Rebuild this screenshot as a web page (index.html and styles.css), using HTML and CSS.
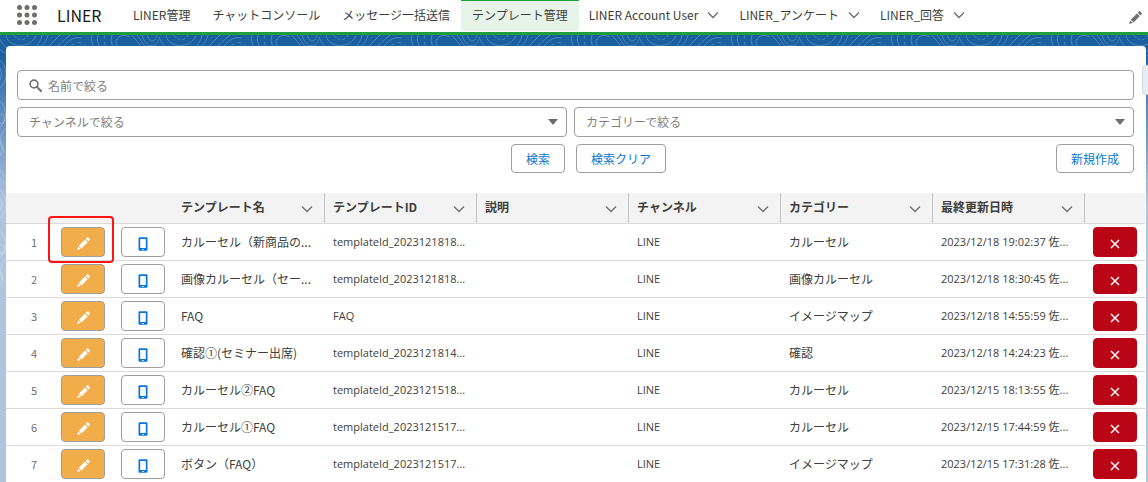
FILE: index.html
```
<!DOCTYPE html>
<html lang="ja">
<head>
<meta charset="utf-8">
<meta name="viewport" content="width=device-width, initial-scale=1">
<title>テンプレート管理 | LINER</title>
<link rel="stylesheet" href="styles.css">
</head>
<body>
<svg class="sprite" aria-hidden="true">
  <symbol id="i-pencil" viewBox="0 0 14 14"><path d="M8.600 2.800l2.900 2.900-6.600 6.600L2 9.400zM9.400 2l1.500-1.500c.4-.4.9-.4 1.200 0l1.600 1.600c.4.4.4.900 0 1.200L12.300 4.900zM1.400 10.200l2.600 2.600-3.300.9c-.3.100-.5-.1-.4-.4z"/></symbol>
  <symbol id="i-phone" viewBox="0 0 10 14"><path fill-rule="evenodd" d="M1.300.3h7.400c.4 0 .8.400.8.800v11.800c0 .4-.4.800-.8.800H1.300c-.4 0-.8-.4-.8-.8V1.100c0-.4.4-.8.8-.8zM2.200 2v9h5.600V2zM4.300 12v.9h1.400V12z"/></symbol>
  <symbol id="i-down" viewBox="0 0 12 8"><path d="M1 1.500l5 5 5-5" fill="none" stroke="currentColor" stroke-width="1.400"/></symbol>
  <symbol id="i-close" viewBox="0 0 10 10"><path d="M1 1l8 8M9 1l-8 8" fill="none" stroke="currentColor" stroke-width="1.500"/></symbol>
</svg>
<header class="nav">
  <button class="launcher" type="button" aria-label="アプリケーションランチャー">
    <svg width="20" height="20" viewBox="0 0 20 20"><g fill="currentColor"><circle cx="2.500" cy="2.500" r="2.500"/><circle cx="10" cy="2.500" r="2.500"/><circle cx="17.500" cy="2.500" r="2.500"/><circle cx="2.500" cy="10" r="2.500"/><circle cx="10" cy="10" r="2.500"/><circle cx="17.500" cy="10" r="2.500"/><circle cx="2.500" cy="17.500" r="2.500"/><circle cx="10" cy="17.500" r="2.500"/><circle cx="17.500" cy="17.500" r="2.500"/></g></svg>
  </button>
  <span class="app">LINER</span>
  <nav class="tabs">
    <a class="tab" href="#">LINER管理</a>
    <a class="tab" href="#">チャットコンソール</a>
    <a class="tab" href="#">メッセージ一括送信</a>
    <a class="tab active" href="#" aria-current="page">テンプレート管理</a>
    <a class="tab menu" href="#">LINER Account User<svg class="chev"><use href="#i-down"/></svg></a>
    <a class="tab menu" href="#">LINER_アンケート<svg class="chev"><use href="#i-down"/></svg></a>
    <a class="tab menu" href="#">LINER_回答<svg class="chev"><use href="#i-down"/></svg></a>
  </nav>
  <button class="customize" type="button" aria-label="ナビゲーションを編集"><svg class="pencil"><use href="#i-pencil"/></svg></button>
</header>
<div class="stage">
  <svg class="contours" aria-hidden="true">
    <defs>
      <pattern id="topo" width="160" height="130" patternUnits="userSpaceOnUse">
        <g fill="none" stroke="#fff" stroke-opacity=".22">
          <path d="M6 0c2 14 26 14 30 0M0 4c6 18 38 18 42-4M-2 12c12 16 44 12 50-12"/>
          <path d="M14 0c2 6 12 6 14 0" stroke-dasharray="3 2"/>
          <path d="M48 12L60 0M54 14L70 0M60 15c8-8 12-14 22-12M92 0c-2 6 1 10 3 14M98 0c-2 6 1 10 3 14M112 0c-2 6 0 10 2 14"/>
          <path d="M66 15c10-10 18-10 22 0M105 0c-2 6 0 10 2 14" stroke-dasharray="4 3"/>
          <path d="M118 14c-6-12 4-16 12-12M132 0l12 15M137 0l10 14M142 0c4 14 14 14 18 2M147 0c3 8 8 8 10 0"/>
          <path d="M-6 22c16 4 16 30 0 34M-6 28c10 4 10 18 0 22M0 66c8 8 8 24-4 28M0 80c6-4 6 12 0 8M6 118c-8-8-8-18 2-26M-2 104c6 4 6 14 0 18"/>
        </g>
      </pattern>
    </defs>
    <rect width="100%" height="260" fill="url(#topo)"/>
  </svg>
  <button class="pull" type="button" aria-label="パネルを開く"></button>
  <main class="panel">
    <form class="filters">
      <label class="field search">
        <svg class="glass" viewBox="0 0 13 13"><circle cx="5" cy="5" r="3.900" fill="none" stroke="currentColor" stroke-width="1.600"/><path d="M7.900 7.900l4.100 4.100" stroke="currentColor" stroke-width="2" stroke-linecap="round"/></svg>
        <input type="search" placeholder="名前で絞る" aria-label="名前で絞る">
      </label>
      <div class="pair">
        <label class="field"><select aria-label="チャンネルで絞る"><option>チャンネルで絞る</option></select><svg class="caret" viewBox="0 0 10 6"><path d="M0 0h10L5 6z" fill="currentColor"/></svg></label>
        <label class="field"><select aria-label="カテゴリーで絞る"><option>カテゴリーで絞る</option></select><svg class="caret" viewBox="0 0 10 6"><path d="M0 0h10L5 6z" fill="currentColor"/></svg></label>
      </div>
      <div class="actions">
        <div class="center"><button class="btn" type="button">検索</button><button class="btn" type="button">検索クリア</button></div>
        <button class="btn create" type="button">新規作成</button>
      </div>
    </form>
    <table class="grid">
      <colgroup><col class="c-num"><col class="c-act"><col class="c-act"><col span="6"><col class="c-act"></colgroup>
      <thead>
        <tr>
          <th></th><th></th><th></th>
          <th class="sep"><div class="head">テンプレート名<svg class="chev"><use href="#i-down"/></svg></div></th>
          <th class="sep"><div class="head">テンプレートID<svg class="chev"><use href="#i-down"/></svg></div></th>
          <th class="sep"><div class="head">説明<svg class="chev"><use href="#i-down"/></svg></div></th>
          <th class="sep"><div class="head">チャンネル<svg class="chev"><use href="#i-down"/></svg></div></th>
          <th class="sep"><div class="head">カテゴリー<svg class="chev"><use href="#i-down"/></svg></div></th>
          <th class="sep"><div class="head">最終更新日時<svg class="chev"><use href="#i-down"/></svg></div></th>
          <th></th>
        </tr>
      </thead>
      <tbody id="rows"></tbody>
    </table>
  </main>
</div>
<script src="rows.js"></script>
</body>
</html>
```
FILE: rows.js
```
const rows = [
  ["カルーセル（新商品の...", "templateId_2023121818...", "カルーセル", "2023/12/18 19:02:37 佐..."],
  ["画像カルーセル（セー...", "templateId_2023121818...", "画像カルーセル", "2023/12/18 18:30:45 佐..."],
  ["FAQ", "FAQ", "イメージマップ", "2023/12/18 14:55:59 佐..."],
  ["確認①(セミナー出席)", "templateId_2023121814...", "確認", "2023/12/18 14:24:23 佐..."],
  ["カルーセル②FAQ", "templateId_2023121518...", "カルーセル", "2023/12/15 18:13:55 佐..."],
  ["カルーセル①FAQ", "templateId_2023121517...", "カルーセル", "2023/12/15 17:44:59 佐..."],
  ["ボタン（FAQ）", "templateId_2023121517...", "イメージマップ", "2023/12/15 17:31:28 佐..."]
];
document.getElementById("rows").innerHTML = rows.map(([name, id, category, updated], i) => `
  <tr>
    <td class="num">${i + 1}</td>
    <td class="act${i === 0 ? " marked" : ""}"><button class="icon-btn edit" type="button" aria-label="編集"><svg class="pencil"><use href="#i-pencil"/></svg></button></td>
    <td class="act"><button class="icon-btn preview" type="button" aria-label="プレビュー"><svg class="phone"><use href="#i-phone"/></svg></button></td>
    <td>${name}</td>
    <td class="latin">${id}</td>
    <td></td>
    <td class="latin">LINE</td>
    <td>${category}</td>
    <td class="latin">${updated}</td>
    <td class="act"><button class="icon-btn delete" type="button" aria-label="削除"><svg class="cross"><use href="#i-close"/></svg></button></td>
  </tr>`).join("");
```
FILE: styles.css
```
* { box-sizing: border-box; }
body {
  margin: 0;
  min-height: 100vh;
  display: flex;
  flex-direction: column;
  overflow: hidden;
  font: 12px/18px "Noto Sans CJK JP", sans-serif;
  color: #3e3e3c;
}
button, input, select { font: inherit; color: inherit; margin: 0; }
button { cursor: pointer; padding: 0; }
.sprite { position: absolute; width: 0; height: 0; }
.nav {
  display: flex;
  align-items: stretch;
  height: 35px;
  flex: none;
  background: #fff;
  border-bottom: 3px solid #1f9f3a;
}
.launcher, .customize {
  display: flex;
  align-items: center;
  border: 0;
  background: none;
  color: #706e6b;
}
.launcher { padding: 0 20px 2px 17px; }
.app { font-size: 16px; line-height: 31px; color: #181818; width: 65px; flex: none; }
.tabs { display: flex; flex: 1; padding-bottom: 1px; white-space: nowrap; }
.tab {
  display: flex;
  align-items: center;
  padding: 0 11px 1px;
  color: inherit;
  text-decoration: none;
}
.tab.menu { gap: 9px; padding: 0 10px 1px; }
.tab.active { background: #e6f4e9; box-shadow: inset 0 1px #1f9f3a; }
.chev { width: 12px; height: 8px; color: #706e6b; flex: none; }
.customize { padding: 2px 6px 0 0; }
.pencil { width: 13px; height: 13px; fill: currentColor; }
.stage {
  position: relative;
  flex: 1;
  padding: 11px 2px 0 6px;
  background: #b0c4df linear-gradient(#1a5f9f 0, #1a5f9f 20px, #5587bd 70px, #b0c4df 170px) no-repeat;
}
.contours { position: absolute; inset: 0; width: 100%; height: 260px; }
.pull {
  position: absolute;
  top: 30px;
  right: 0;
  width: 6px;
  height: 30px;
  z-index: 2;
  border: 1px solid #d5dbe5;
  border-right: 0;
  border-radius: 4px 0 0 4px;
  background: #e6edf5;
}
.panel {
  position: relative;
  min-height: 100%;
  background: #fff;
  border-radius: 4px 4px 0 0;
  padding-top: 24px;
}
.filters { display: grid; gap: 7px; padding: 0 12px 20px 11px; }
.field {
  display: flex;
  align-items: center;
  height: 30px;
  border: 1px solid #a09f9d;
  border-radius: 4px;
  background: #fff;
  color: #706e6b;
}
.field input, .field select {
  flex: 1;
  min-width: 0;
  height: 28px;
  border: 0;
  outline: 0;
  background: none;
  appearance: none;
}
.field input::placeholder { color: #807e7b; opacity: 1; }
.field select { padding: 0 11px; color: #807e7b; }
.search { padding: 0 11px; gap: 6px; }
.glass { width: 13px; height: 13px; }
.field input { padding: 0; }
.caret { width: 10px; height: 6px; margin-right: 8px; }
.pair { display: grid; grid-template-columns: 55fr 56fr; gap: 7px; }
.actions { display: grid; grid-template-columns: 1fr auto 1fr; }
.center { grid-column: 2; display: flex; gap: 11px; padding-left: 26px; }
.btn {
  height: 29px;
  padding: 0 14px;
  border: 1px solid #a09f9d;
  border-radius: 4px;
  background: #fff;
  color: #0b76d1;
}
.create { justify-self: end; }
.grid { width: calc(100% - 1px); table-layout: fixed; border-collapse: separate; border-spacing: 0; }
.c-num { width: 47px; }
.c-act { width: 60px; }
th {
  height: 31px;
  padding: 0 11px 3px 8px;
  background: #f3f3f3;
  border-bottom: 1px solid #dddbda;
  text-align: left;
  font-weight: 700;
}
th.sep { border-right: 1px solid #c4c3c2; }
.head { display: flex; align-items: center; justify-content: space-between; }
.head .chev { margin-top: 4px; }
td {
  height: 37px;
  padding: 0 0 0 8px;
  border-bottom: 1px solid #dddbda;
  white-space: nowrap;
  overflow: hidden;
}
td.latin { font-family: "Open Sans", "Noto Sans CJK JP", sans-serif; font-size: 11px; }
td.num { padding: 0 16px 0 0; text-align: right; font-size: 11px; color: #706e6b; }
td.act { overflow: visible; }
.icon-btn {
  display: flex;
  align-items: center;
  justify-content: center;
  width: 44px;
  height: 30px;
  padding-top: 3px;
  border: 1px solid #a09f9d;
  border-radius: 4px;
}
.edit { background: #f0ad4a; color: #fff; }
.preview { background: #fff; color: #0b76d9; }
.delete { background: #ba0517; border-color: #ba0517; color: #fff; }
.phone { width: 10px; height: 14px; fill: currentColor; }
.cross { width: 10px; height: 10px; }
.marked { position: relative; }
.marked::after {
  content: "";
  position: absolute;
  inset: -8px -1px -3px -5px;
  border: 2px solid #ff1414;
  border-radius: 4px;
  pointer-events: none;
}
```
